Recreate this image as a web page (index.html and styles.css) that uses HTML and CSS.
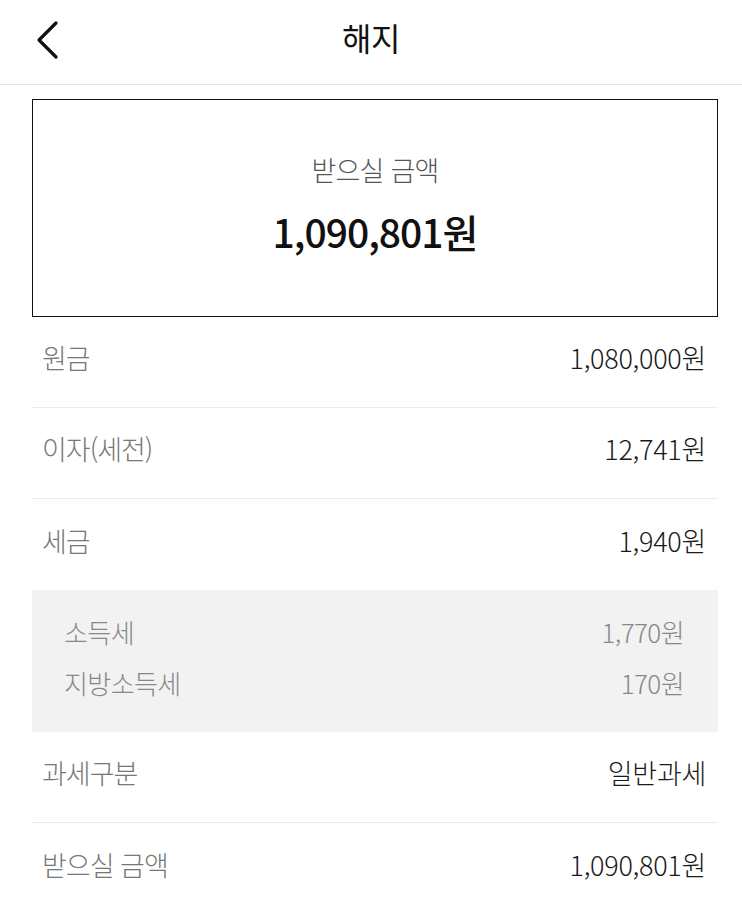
FILE: index.html
```html
<!DOCTYPE html>
<html lang="ko">
<head>
    <meta charset="UTF-8">
    <title>해지</title>
    <meta name="viewport" content="width=device-width, initial-scale=1.0">
    <link rel="stylesheet" href="styles.css">
</head>
<body>
    <header class="topbar">
        <a href="#" class="back-btn" aria-label="뒤로">
            <svg width="26" height="40" viewBox="0 0 26 40">
                <polyline points="22,3 5,20 22,37" fill="none" stroke="#111" stroke-width="3.2" stroke-linecap="round" stroke-linejoin="round"/>
            </svg>
        </a>
        <h1 class="topbar-title">해지</h1>
    </header>

    <main class="content">
        <section class="total-box">
            <div class="total-label">받으실 금액</div>
            <div class="total-amount">1,090,801원</div>
        </section>

        <ul class="detail-list">
            <li class="detail-row">
                <span class="detail-label">원금</span>
                <span class="detail-value">1,080,000원</span>
            </li>
            <li class="detail-row">
                <span class="detail-label">이자(세전)</span>
                <span class="detail-value">12,741원</span>
            </li>
            <li class="detail-row no-border">
                <span class="detail-label">세금</span>
                <span class="detail-value">1,940원</span>
            </li>
            <li class="tax-breakdown">
                <div class="sub-row">
                    <span>소득세</span>
                    <span>1,770원</span>
                </div>
                <div class="sub-row">
                    <span>지방소득세</span>
                    <span>170원</span>
                </div>
            </li>
            <li class="detail-row">
                <span class="detail-label">과세구분</span>
                <span class="detail-value">일반과세</span>
            </li>
            <li class="detail-row no-border">
                <span class="detail-label">받으실 금액</span>
                <span class="detail-value">1,090,801원</span>
            </li>
        </ul>
    </main>
</body>
</html>
```

FILE: styles.css
```css
body {
    margin: 0;
    padding: 0;
    background: #fff;
    font-family: "Noto Sans CJK KR", "Noto Sans", sans-serif;
    color: #111;
}
.topbar {
    height: 84px;
    border-bottom: 1px solid #e4e4e4;
    display: flex;
    align-items: center;
    justify-content: center;
    position: relative;
}
.back-btn {
    position: absolute;
    left: 34px;
    top: 20px;
    display: block;
}
.topbar-title {
    margin: 0;
    font-size: 32px;
    font-weight: 400;
    letter-spacing: -0.5px;
    margin-top: -10px;
}
.content {
    padding: 14px 24px 0 32px;
}
.total-box {
    border: 1px solid #111;
    height: 216px;
    display: flex;
    flex-direction: column;
    align-items: center;
    justify-content: center;
}
.total-label {
    font-size: 27px;
    font-weight: 300;
    color: #555;
    letter-spacing: -0.8px;
    margin-top: -8px;
}
.total-amount {
    font-size: 39px;
    font-weight: 500;
    letter-spacing: -1px;
    margin-top: 14px;
}
.detail-list {
    list-style: none;
    margin: 0;
    padding: 0;
}
.detail-row {
    height: 91px;
    display: flex;
    align-items: center;
    justify-content: space-between;
    padding: 0 12px 9px 10px;
    border-bottom: 1px solid #ececec;
    box-sizing: border-box;
    font-size: 27px;
    font-weight: 300;
    letter-spacing: -1px;
}
.detail-row.no-border {
    border-bottom: none;
}
.detail-label {
    color: #777;
}
.detail-value {
    color: #1a1a1a;
    letter-spacing: -0.3px;
}
.tax-breakdown {
    background: #f2f2f2;
    padding: 18px 34px 26px 32px;
    display: flex;
    flex-direction: column;
    gap: 4px;
}
.sub-row {
    display: flex;
    justify-content: space-between;
    align-items: center;
    height: 47px;
    font-size: 26px;
    font-weight: 300;
    color: #888;
    letter-spacing: -0.6px;
}
```
